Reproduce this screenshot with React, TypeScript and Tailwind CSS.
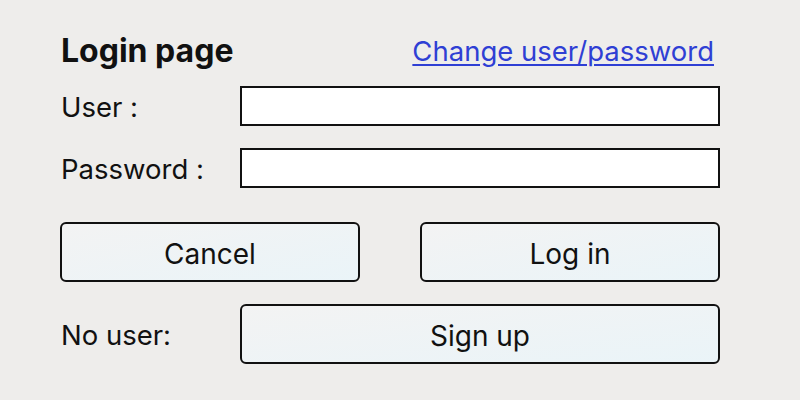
import React from "react";

const btn =
  "h-[60px] rounded-[6px] border-2 border-[#111] bg-gradient-to-br from-[#f3f3f3] to-[#eaf4f8] pt-[3px] text-[28px] text-[#111]";

export default function App() {
  return (
    <div
      className="h-[400px] w-[800px] bg-[#eeedeb] text-[#111]"
      style={{ fontFamily: "Inter, 'Noto Sans', sans-serif" }}
    >
      <div className="flex flex-col pl-[60px] pr-[80px] pt-[30px]">
        <div className="flex h-[42px] items-center justify-between pr-[6px]">
          <h1 className="pl-px text-[32px] font-bold">Login page</h1>
          <a href="#" className="pt-[2px] text-[27.5px] text-[#2f3fd4] underline underline-offset-[3px]">
            Change user/password
          </a>
        </div>

        <div className="mt-[14px] flex h-[40px] items-center">
          <label className="w-[180px] pl-px pt-[4px] text-[27.5px]">User :</label>
          <input className="h-[40px] flex-1 border-2 border-[#111] bg-white" />
        </div>
        <div className="mt-[22px] flex h-[40px] items-center">
          <label className="w-[180px] pl-px pt-[4px] text-[27.5px]">Password :</label>
          <input type="password" className="h-[40px] flex-1 border-2 border-[#111] bg-white" />
        </div>

        <div className="mt-[34px] flex justify-between">
          <button className={`${btn} w-[300px]`}>Cancel</button>
          <button className={`${btn} w-[300px]`}>Log in</button>
        </div>

        <div className="mt-[22px] flex items-center">
          <span className="w-[180px] pl-px pt-[4px] text-[27.5px]">No user:</span>
          <button className={`${btn} flex-1`}>Sign up</button>
        </div>
      </div>
    </div>
  );
}
